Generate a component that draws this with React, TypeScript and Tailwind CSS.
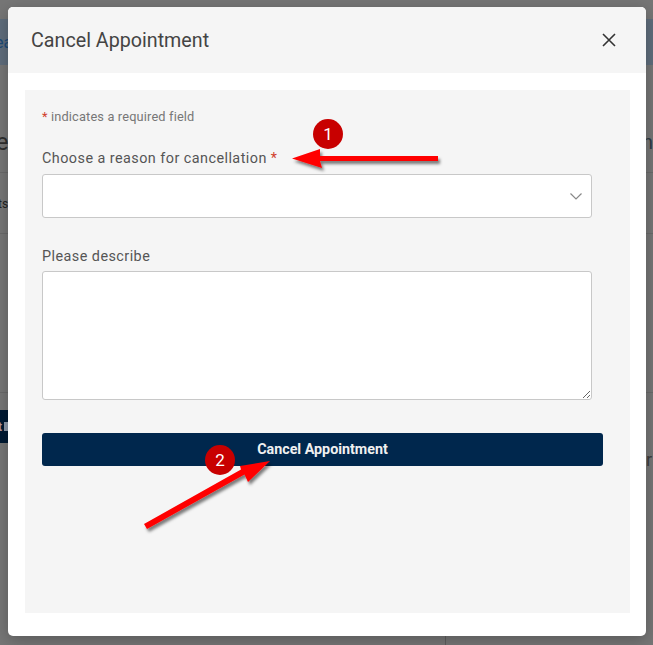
const ArrowOverlay = () => (
  <svg className="absolute left-0 top-0 pointer-events-none" width="653" height="645" viewBox="0 0 653 645">
    <defs>
      <filter id="arrowShadow" x="-20%" y="-20%" width="140%" height="140%">
        <feDropShadow dx="2" dy="3" stdDeviation="1.5" floodColor="#000" floodOpacity="0.5" />
      </filter>
    </defs>
    <g filter="url(#arrowShadow)" fill="#ff0000">
      <polygon points="292,158.5 320,149 320,156 438,156 438,161 320,161 322,168" />
      <polygon points="270,461 248,482 244.5,474.5 147,529 144,524 241,469.5 240,466" />
    </g>
  </svg>
);

const Badge = ({ n, className }: { n: string; className: string }) => (
  <div
    className={`absolute flex h-[30px] w-[30px] items-center justify-center rounded-full bg-[#c80000] text-[17px] leading-none text-white ${className}`}
  >
    {n}
  </div>
);

export default function App() {
  return (
    <div className="relative h-[645px] w-[653px] overflow-hidden bg-[#767676] font-['Roboto',sans-serif]">
      {/* page behind the dialog */}
      <div className="flex flex-col pt-[19px]">
        <div className="flex h-[46px] items-center bg-[#5f6d7c] pt-[1px] text-[16px] text-[#1c4a78]">
          <span className="-ml-[5px]">ea</span>
        </div>
        <div className="mt-[60px] flex h-[48px] items-center justify-between border-b border-[#6a6a6a] pb-[14px]">
          <span className="-ml-[10px] text-[24px] text-[#2e2e2e]">le</span>
          <span className="text-[20px] leading-none text-[#2e3a44]">n</span>
        </div>
        <div className="flex h-[61px] items-center border-b border-[#6a6a6a] pt-[1px] text-[12px] text-[#222]">
          <span className="-ml-[2px]">ts</span>
        </div>
        <div className="h-[159px] border-b border-[#6a6a6a]" />
        <div className="mt-[17px] flex h-[33px] items-center justify-between">
          <div className="flex h-full w-[10px] items-center gap-[2px] bg-[#001a33] text-[12px] font-bold text-[#b89aa0]">
            <span className="-ml-[2px]">t</span>
            <span className="h-[9px] w-[4px] bg-[#8c98a8]" />
          </div>
        </div>
        <div className="mt-[8px] flex justify-end pr-[1px] text-[18px] leading-none text-[#3c3c3c]">r</div>
        <div className="mt-[167px] ml-[445px] h-[20px] w-px bg-[#5e5e5e]" />
      </div>

      {/* dialog */}
      <div className="absolute left-[8px] top-[7px] flex h-[629px] w-[638px] flex-col rounded-[5px] bg-white shadow-[0_4px_16px_rgba(0,0,0,0.25)]">
        <div className="flex h-[66px] items-center justify-between rounded-t-[5px] bg-[#f5f5f5] pl-[23px] pr-[29px]">
          <h1 className="pt-[1px] text-[19.7px] font-normal text-[#444444]">Cancel Appointment</h1>
          <svg width="16" height="16" viewBox="0 0 16 16" fill="none" stroke="#333" strokeWidth="1.6">
            <path d="M2 2 L14 14 M14 2 L2 14" />
          </svg>
        </div>
        <div className="mx-[17px] mt-[17px] h-[523px] w-[605px] bg-[#f5f5f5] px-[17px] pt-[19px]">
          <p className="text-[12.8px] leading-[16px] tracking-[0.15px] text-[#777777]">
            <span className="text-[#d0402c]">*</span> indicates a required field
          </p>
          <label className="mt-[25px] block text-[14.4px] leading-[18px] tracking-[0.45px] text-[#555555]">
            Choose a reason for cancellation <span className="text-[#d0402c]">*</span>
          </label>
          <div className="mt-[6px] flex h-[44px] w-[550px] items-center justify-end rounded-[3px] border border-[#c8c8c8] bg-white pr-[9px]">
            <svg width="12" height="7" viewBox="0 0 12 7" fill="none" stroke="#888" strokeWidth="1.2">
              <path d="M0.5 0.5 L6 6 L11.5 0.5" />
            </svg>
          </div>
          <label className="mt-[30px] block text-[14.4px] leading-[18px] tracking-[0.45px] text-[#555555]">Please describe</label>
          <textarea
            readOnly
            className="mt-[5px] block h-[129px] w-[550px] rounded-[3px] border border-[#c8c8c8] bg-white"
          />
          <button className="mt-[33px] block h-[33px] w-[561px] rounded-[3px] bg-[#00274d] text-center text-[14.3px] font-bold text-[#f0f0f0]">
            Cancel Appointment
          </button>
        </div>
      </div>

      {/* screenshot annotations */}
      <ArrowOverlay />
      <Badge n="1" className="left-[313px] top-[119px]" />
      <Badge n="2" className="left-[205px] top-[445px]" />
    </div>
  );
}
